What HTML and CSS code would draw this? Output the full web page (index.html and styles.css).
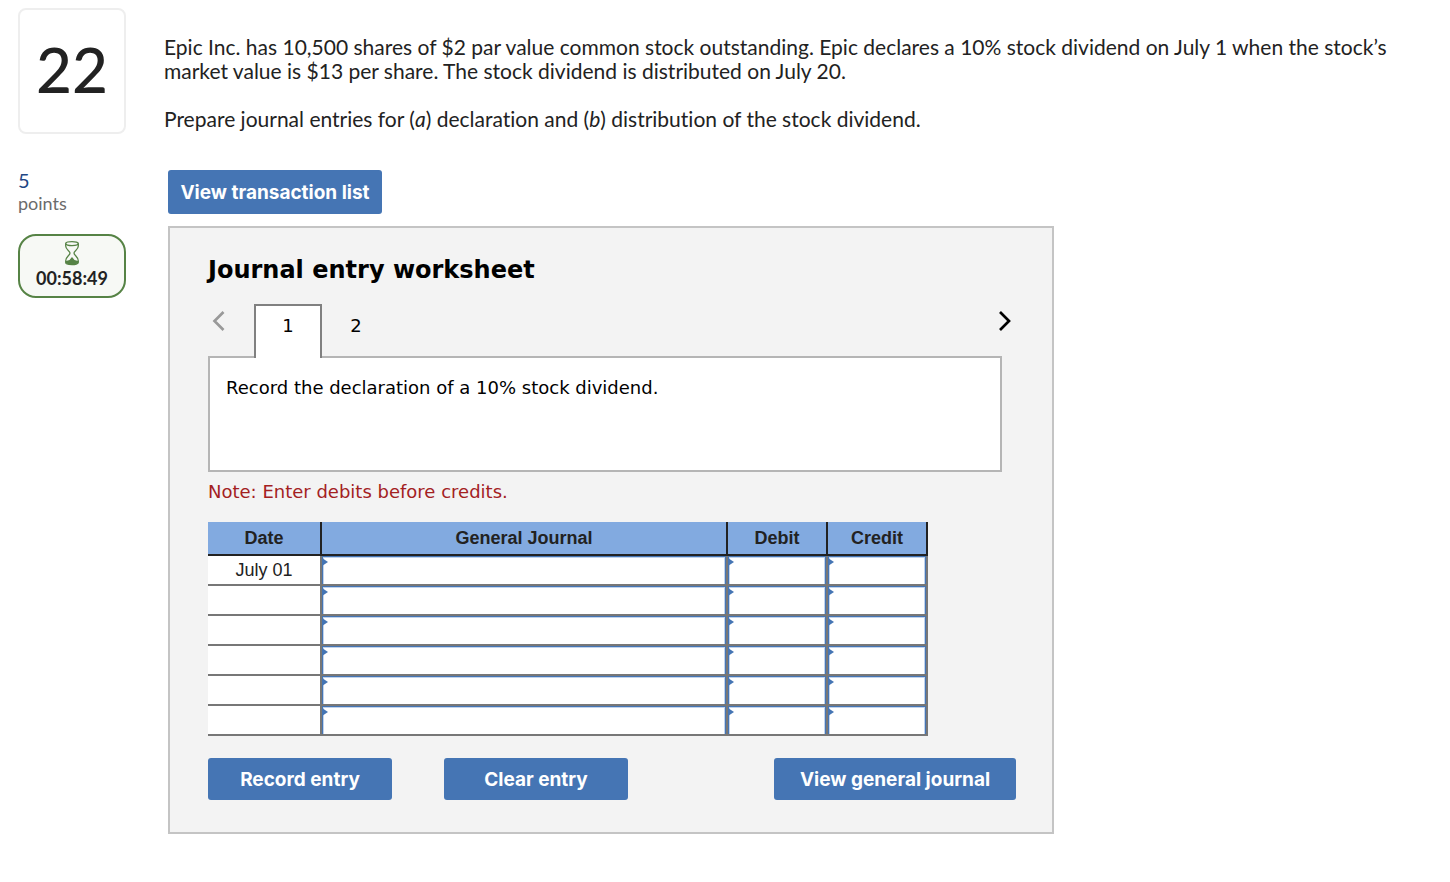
FILE: index.html
```html
<!DOCTYPE html>
<html lang="en">
<head>
<meta charset="utf-8">
<title>Question 22</title>
<link rel="stylesheet" href="styles.css">
</head>
<body>
<div class="page">
  <aside class="side">
    <div class="number">22</div>
    <div class="points"><span class="points-value">5</span><span>points</span></div>
    <div class="timer">
      <svg class="hourglass" viewBox="0 0 16 26" width="16" height="26" aria-hidden="true">
        <g fill="none" stroke="#568345" stroke-width="1.3">
          <ellipse cx="8" cy="3.6" rx="6.3" ry="2"/>
          <path d="M1.7 3.6V6C1.7 10 6 10.500 6 13S1.700 16.500 1.700 21V22.500C1.700 25.300 14.300 25.300 14.300 22.500V21C14.300 16.500 10 15.500 10 13S14.300 10 14.300 6V3.600"/>
        </g>
        <path d="M2 21 5.500 20 8 17 10.500 20 14 21V23C12 25 4 25 2 23Z" fill="#568345"/>
      </svg>
      <span>00:58:49</span>
    </div>
  </aside>
  <main class="main">
    <div class="question">
      <p>Epic Inc. has 10,500 shares of $2 par value common stock outstanding. Epic declares a 10% stock dividend on July 1 when the stock’s market value is $13 per share. The stock dividend is distributed on July 20.</p>
      <p>Prepare journal entries for (<i>a</i>) declaration and (<i>b</i>) distribution of the stock dividend.</p>
    </div>
    <div class="work">
      <button class="btn btn-list" type="button">View transaction list</button>
      <section class="panel">
        <h1>Journal entry worksheet</h1>
        <div class="tabs">
          <button class="arrow prev" type="button" aria-label="Previous">
            <svg viewBox="0 0 14 22" width="14" height="22"><path d="M11.500 2 2.500 11 11.500 20" fill="none" stroke="currentColor" stroke-width="2.700"/></svg>
          </button>
          <button class="tab active" type="button">1</button>
          <button class="tab" type="button">2</button>
          <button class="arrow next" type="button" aria-label="Next">
            <svg viewBox="0 0 14 22" width="14" height="22"><path d="M2 2 11 11 2 20" fill="none" stroke="currentColor" stroke-width="2.700"/></svg>
          </button>
        </div>
        <div class="task">Record the declaration of a 10% stock dividend.</div>
        <p class="note">Note: Enter debits before credits.</p>
        <table class="journal">
          <colgroup><col class="c-date"><col><col class="c-amount"><col class="c-amount"></colgroup>
          <thead><tr><th>Date</th><th>General Journal</th><th>Debit</th><th>Credit</th></tr></thead>
          <tbody>
            <tr><td>July 01</td><td class="entry"><input type="text" aria-label="General journal, line 1"></td><td class="entry"><input type="text" aria-label="Debit, line 1"></td><td class="entry"><input type="text" aria-label="Credit, line 1"></td></tr>
            <tr><td></td><td class="entry"><input type="text" aria-label="General journal, line 2"></td><td class="entry"><input type="text" aria-label="Debit, line 2"></td><td class="entry"><input type="text" aria-label="Credit, line 2"></td></tr>
            <tr><td></td><td class="entry"><input type="text" aria-label="General journal, line 3"></td><td class="entry"><input type="text" aria-label="Debit, line 3"></td><td class="entry"><input type="text" aria-label="Credit, line 3"></td></tr>
            <tr><td></td><td class="entry"><input type="text" aria-label="General journal, line 4"></td><td class="entry"><input type="text" aria-label="Debit, line 4"></td><td class="entry"><input type="text" aria-label="Credit, line 4"></td></tr>
            <tr><td></td><td class="entry"><input type="text" aria-label="General journal, line 5"></td><td class="entry"><input type="text" aria-label="Debit, line 5"></td><td class="entry"><input type="text" aria-label="Credit, line 5"></td></tr>
            <tr><td></td><td class="entry"><input type="text" aria-label="General journal, line 6"></td><td class="entry"><input type="text" aria-label="Debit, line 6"></td><td class="entry"><input type="text" aria-label="Credit, line 6"></td></tr>
          </tbody>
        </table>
        <div class="actions">
          <button class="btn" type="button">Record entry</button>
          <button class="btn" type="button">Clear entry</button>
          <button class="btn btn-wide" type="button">View general journal</button>
        </div>
      </section>
    </div>
  </main>
</div>
</body>
</html>
```
FILE: styles.css
```css
* { box-sizing: border-box; }
body { margin: 0; background: #fff; color: #222; font-family: Lato, sans-serif; font-variant-ligatures: none; }
p, h1 { margin: 0; }
button { font: inherit; cursor: pointer; }

.page { display: grid; grid-template-columns: 108px minmax(0, 1fr); column-gap: 38px; padding: 8px 40px 48px 18px; }

.side { display: flex; flex-direction: column; }
.number { height: 126px; display: flex; align-items: center; justify-content: center; padding-bottom: 4px; border: 2px solid #eee; border-radius: 8px; font-size: 62px; line-height: 64px; font-weight: 500; }
.points { display: flex; flex-direction: column; margin-top: 34px; font-size: 18px; line-height: 22px; color: #6b6b6b; }
.points-value { font-size: 20px; line-height: 24px; color: #1f4785; }
.timer { display: flex; flex-direction: column; align-items: center; height: 64px; margin-top: 20px; padding-top: 4px; border: 2px solid #568345; border-radius: 18px; background: #f7f9f5; font-size: 18px; line-height: 24px; font-weight: 700; }

.question { display: grid; gap: 24px; padding-top: 27px; font-size: 21px; line-height: 24px; }
.work { margin: 39px 0 0 4px; }

.btn { height: 42px; width: 184px; padding: 0; border: 0; border-radius: 3px; background: #4575b4; color: #fff; font-family: Inter, sans-serif; font-size: 19px; font-weight: 700; white-space: nowrap; }
.btn-list { display: block; width: 214px; height: 44px; }
.btn-wide { width: 242px; margin-left: auto; }

.panel { max-width: 886px; margin-top: 12px; padding: 26px 36px 32px 38px; border: 2px solid #c4c4c4; background: #f3f3f3; color: #000; font-family: "DejaVu Sans", sans-serif; }
h1 { font-size: 24px; line-height: 32px; font-weight: 700; }

.tabs { display: flex; margin: 18px 0 -2px; }
.arrow { display: flex; width: 46px; height: 34px; padding: 0 4px; align-items: center; border: 0; background: none; color: #999; }
.next { justify-content: flex-end; margin-left: auto; color: #000; }
.tab { width: 68px; height: 54px; padding: 0 0 12px; border: 0; background: none; color: #000; font-size: 18px; }
.tab.active { position: relative; border: 2px solid #808080; border-bottom: 0; background: #fff; padding-bottom: 14px; }

.task { min-height: 116px; margin-right: 14px; padding: 18px 16px; border: 2px solid #b5b5b5; background: #fff; font-size: 18px; line-height: 24px; }
.note { margin-top: 8px; color: #a3211f; font-size: 18px; line-height: 24px; }

.journal { width: 100%; max-width: 720px; margin-top: 18px; table-layout: fixed; border-collapse: separate; border-spacing: 0; color: #222; font-family: "Liberation Sans", sans-serif; font-size: 18px; line-height: 24px; }
.c-date { width: 114px; }
.c-amount { width: 100px; }
.journal th { height: 34px; padding: 0; border: solid #222; border-width: 0 2px 2px 0; background: #82aae0; font-weight: 700; }
.journal td { height: 30px; padding: 0; border: solid #777; border-width: 0 2px 2px 0; background: #fff; text-align: center; }
.entry { position: relative; }
.entry input { display: block; width: 100%; height: 28px; padding: 0 8px; border: 1px solid #4575b4; border-bottom: 0; border-radius: 0; background: #fff; box-shadow: inset 1px 1px #c1d3eb, inset -1px 0 #c1d3eb; outline: 0; font: inherit; }
.entry::before { content: ""; position: absolute; left: 0; top: 2px; width: 6px; height: 8px; background: #4575b4; clip-path: polygon(0 0, 100% 50%, 0 100%); }

.actions { display: flex; gap: 52px; margin-top: 22px; }
```
